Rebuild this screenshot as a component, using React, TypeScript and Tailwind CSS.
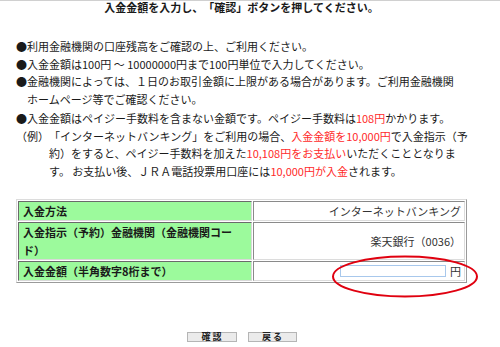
import React from "react";

const red = "text-[#ff2a2a]";

export default function App() {
  return (
    <div className="relative w-[500px] h-[347px] overflow-hidden bg-white border-t border-[#d0d0d0] text-[#1a1a1a] font-['Noto_Sans_CJK_JP',sans-serif] [text-spacing-trim:space-all]">
      <div className="ml-[16px] w-[451px]">
        {/* Title */}
        <div className="text-center text-[11px] font-bold leading-[13px]">
          入金金額を入力し、「確認」ボタンを押してください。
        </div>

        {/* Notes */}
        <div className="mt-[24px] text-[11px] leading-[17.5px] whitespace-nowrap">
          <div>●利用金融機関の口座残高をご確認の上、ご利用ください。</div>
          <div>●入金金額は100円 ～ 10000000円まで100円単位で入力してください。</div>
          <div>●金融機関によっては、１日のお取引金額に上限がある場合があります。ご利用金融機関</div>
          <div className="pl-[11px]">ホームページ等でご確認ください。</div>
          <div className="mt-[2px]">
            ●入金金額はペイジー手数料を含まない金額です。ペイジー手数料は
            <span className={red}>108円</span>かかります。
          </div>
          <div className="flex">
            <div className="w-[33px] shrink-0">（例）</div>
            <div>
              <div>
                「インターネットバンキング」をご利用の場合、
                <span className={red}>入金金額を10,000円</span>で入金指示（予
              </div>
              <div>
                約）をすると、ペイジー手数料を加えた
                <span className={red}>10,108円をお支払い</span>いただくこととなりま
              </div>
              <div>
                す。 お支払い後、ＪＲＡ電話投票用口座には
                <span className={red}>10,000円が入金</span>されます。
              </div>
            </div>
          </div>
        </div>

        {/* Form table */}
        <table className="mt-[19px] w-[451px] table-fixed border-separate border-spacing-[1px] border border-t-[#dcdcdc] border-l-[#dcdcdc] border-b-[#9a9a9a] border-r-[#9a9a9a] text-[11px] leading-[18px]">
          <colgroup>
            <col className="w-[234px]" />
            <col />
          </colgroup>
          <tbody>
            <tr>
              <td className="bg-[#9cfa9c] font-bold pl-[4px] border border-t-[#6a6a6a] border-l-[#6a6a6a] border-b-[#d8d8d8] border-r-[#d8d8d8] align-middle">
                入金方法
              </td>
              <td className="text-right pr-[3px] text-[#333] border border-t-[#8a8a8a] border-l-[#8a8a8a] border-b-[#dcdcdc] border-r-[#dcdcdc] align-middle">
                インターネットバンキング
              </td>
            </tr>
            <tr>
              <td className="bg-[#9cfa9c] font-bold pl-[4px] border border-t-[#6a6a6a] border-l-[#6a6a6a] border-b-[#d8d8d8] border-r-[#d8d8d8] align-middle">
                入金指示（予約）金融機関（金融機関コー
                <br />
                ド）
              </td>
              <td className="text-right pr-[3px] text-[#333] border border-t-[#8a8a8a] border-l-[#8a8a8a] border-b-[#dcdcdc] border-r-[#dcdcdc] align-middle">
                楽天銀行（0036）
              </td>
            </tr>
            <tr>
              <td className="bg-[#9cfa9c] font-bold pl-[4px] border border-t-[#6a6a6a] border-l-[#6a6a6a] border-b-[#d8d8d8] border-r-[#d8d8d8] align-middle">
                入金金額（半角数字8桁まで）
              </td>
              <td className="pr-[3px] text-[#333] border border-t-[#8a8a8a] border-l-[#8a8a8a] border-b-[#dcdcdc] border-r-[#dcdcdc] align-middle">
                <div className="flex items-center justify-end gap-[4px]">
                  <input
                    type="text"
                    className="w-[106px] h-[12px] border border-[#a8c8ec] bg-white outline-none"
                  />
                  <span>円</span>
                </div>
              </td>
            </tr>
          </tbody>
        </table>

        {/* Buttons */}
        <div className="mt-[49px] flex justify-center gap-[11px]">
          <button className="w-[50px] h-[10px] bg-[#ebebeb] border border-[#b5b5b5] text-[9px] leading-[8px] font-bold text-[#222]">
            確 認
          </button>
          <button className="w-[49px] h-[10px] bg-[#ebebeb] border border-[#b5b5b5] text-[9px] leading-[8px] font-bold text-[#222]">
            戻 る
          </button>
        </div>
      </div>

      {/* Red highlight circle */}
      <svg
        className="absolute left-[331px] top-[254px]"
        width="148"
        height="43"
        viewBox="0 0 148 43"
      >
        <ellipse cx="74" cy="21.5" rx="72" ry="20" fill="none" stroke="#e0000f" strokeWidth="2" />
      </svg>
    </div>
  );
}
